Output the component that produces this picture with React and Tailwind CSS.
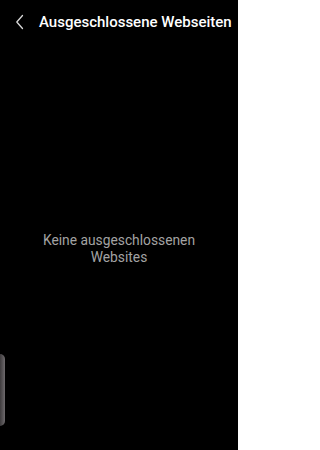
import React from 'react'

const App = () => {
    return (
        <div className="relative w-[238px] h-[450px] bg-black overflow-hidden" style={{ fontFamily: 'Roboto, "Noto Sans", sans-serif' }}>
            <div className="flex items-center h-[44px] pl-[15px]">
                <svg width="10" height="16" viewBox="0 0 10 16" fill="none" className="shrink-0">
                    <path d="M7.5 1.5 L1.8 8 L7.5 14.5" stroke="#d8d8d8" strokeWidth="1.3" strokeLinecap="round" strokeLinejoin="round" />
                </svg>
                <h1 className="ml-[14px] text-[15px] font-medium text-white whitespace-nowrap">
                    Ausgeschlossene Webseiten
                </h1>
            </div>

            <div className="flex justify-center pt-[188px]">
                <p className="text-center text-[13.8px] leading-[17px] text-[#a3a3a3]">
                    Keine ausgeschlossenen
                    <br />
                    Websites
                </p>
            </div>

            {/* scroll edge indicator */}
            <div className="absolute left-0 top-[354px] w-[5px] h-[72px] rounded-r-full bg-gradient-to-r from-[#3e3b3d] to-[#6e6a6d]" />
        </div>
    )
}

export default App
